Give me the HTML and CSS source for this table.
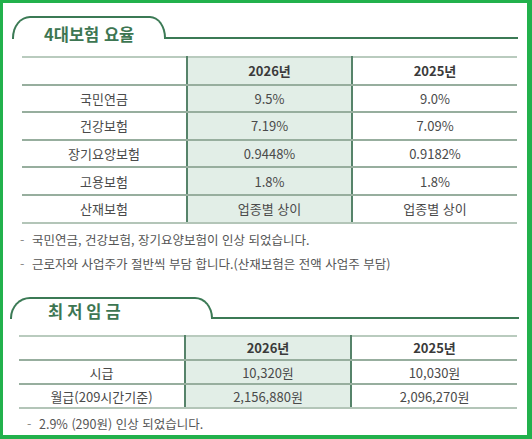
FILE: index.html
```html
<!DOCTYPE html>
<html lang="ko">
<head>
  <meta charset="UTF-8">
  <meta name="viewport" content="width=device-width, initial-scale=1.0">
  <title>4대보험 요율 / 최저임금</title>
  <link rel="stylesheet" href="styles.css">
</head>
<body>
  <div class="frame">
    <div class="sec-head first">
      <div class="tab"><span class="tab-title">4대보험 요율</span></div>
      <div class="rule"></div>
    </div>
    <table class="rates">
      <tr class="head">
        <td></td>
        <td class="cur">2026년</td>
        <td>2025년</td>
      </tr>
      <tr><td>국민연금</td><td class="cur">9.5%</td><td>9.0%</td></tr>
      <tr><td>건강보험</td><td class="cur">7.19%</td><td>7.09%</td></tr>
      <tr><td>장기요양보험</td><td class="cur">0.9448%</td><td>0.9182%</td></tr>
      <tr><td>고용보험</td><td class="cur">1.8%</td><td>1.8%</td></tr>
      <tr><td>산재보험</td><td class="cur">업종별 상이</td><td>업종별 상이</td></tr>
    </table>
    <ul class="notes">
      <li>국민연금, 건강보험, 장기요양보험이 인상 되었습니다.</li>
      <li>근로자와 사업주가 절반씩 부담 합니다.(산재보험은 전액 사업주 부담)</li>
    </ul>

    <div class="sec-head second">
      <div class="tab wide"><span class="tab-title spaced">최저임금</span></div>
      <div class="rule"></div>
    </div>
    <table class="rates wage">
      <tr class="head">
        <td></td>
        <td class="cur">2026년</td>
        <td>2025년</td>
      </tr>
      <tr><td>시급</td><td class="cur">10,320원</td><td>10,030원</td></tr>
      <tr><td>월급(209시간기준)</td><td class="cur">2,156,880원</td><td>2,096,270원</td></tr>
    </table>
    <ul class="notes last">
      <li>2.9% (290원) 인상 되었습니다.</li>
    </ul>
  </div>
</body>
</html>
```

FILE: styles.css
```css
body {
  margin: 0;
  font-family: "Noto Sans CJK KR", "Noto Sans", sans-serif;
  background: #fff;
  color: #444;
}
.frame {
  width: 532px;
  height: 439px;
  box-sizing: border-box;
  border: 3px solid #22b14c;
  border-right-width: 5px;
  border-bottom-width: 4px;
  overflow: hidden;
}
.sec-head {
  display: flex;
  align-items: flex-end;
  margin: 13px 9px 0 9px;
}
.sec-head.second {
  margin: 21px 8px 0 7px;
}
.tab {
  width: 154px;
  height: 23px;
  box-sizing: border-box;
  border: 2px solid #3b7a55;
  border-bottom: none;
  border-radius: 18px 16px 0 0 / 22px 22px 0 0;
  padding: 8px 0 0 30px;
  line-height: 16px;
  flex-shrink: 0;
}
.tab.wide {
  width: 203px;
  height: 22px;
  padding: 4px 0 0 36px;
  border-radius: 20px 18px 0 0 / 21px 21px 0 0;
}
.tab-title {
  display: block;
  font-size: 16.5px;
  font-weight: 700;
  color: #3d7652;
  white-space: nowrap;
}
.tab-title.spaced {
  letter-spacing: 4px;
}
.rule {
  flex: 1;
  height: 0;
  border-bottom: 2px solid #3b7a55;
}
.rates {
  width: 495px;
  margin: 17px 0 0 19px;
  border-collapse: collapse;
  font-size: 13px;
  text-align: center;
  border-top: 2px solid #b9cbbe;
}
.rates td {
  height: 25.6px;
  padding: 0;
  border-bottom: 2px solid #97ae9e;
  color: #4a4a4a;
  width: 33.3%;
}
.rates tr:last-child td {
  border-bottom-color: #b3c5b8;
}
.rates td + td {
  border-left: 2px solid #56836a;
}
.rates td.cur {
  background: #e2eee7;
}
.rates .head td {
  font-weight: 700;
  color: #3a3a3a;
}
.rates.wage {
  margin: 16px 0 0 16px;
  width: 498px;
}
.rates.wage td {
  height: 22.3px;
}
.notes {
  list-style: none;
  margin: 4px 0 0 17px;
  padding: 0;
  font-size: 12.5px;
  line-height: 24px;
  color: #555;
}
.notes li::before {
  content: "-";
  color: #888;
  display: inline-block;
  width: 12px;
}
.notes.last {
  margin: 5px 0 0 24px;
  line-height: 20px;
}
```
